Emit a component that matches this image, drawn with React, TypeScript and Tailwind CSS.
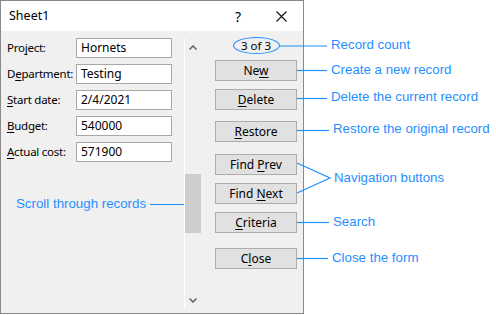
const BLUE = '#1f8fff';

const fields = [
  { pre: 'Pro', key: 'j', post: 'ect:', value: 'Hornets' },
  { pre: 'D', key: 'e', post: 'partment:', value: 'Testing' },
  { pre: '', key: 'S', post: 'tart date:', value: '2/4/2021' },
  { pre: '', key: 'B', post: 'udget:', value: '540000' },
  { pre: '', key: 'A', post: 'ctual cost:', value: '571900' },
];

const buttons = [
  { pre: 'Ne', key: 'w', post: '', mt: 'mt-[6px]' },
  { pre: '', key: 'D', post: 'elete', mt: 'mt-[8px]' },
  { pre: '', key: 'R', post: 'estore', mt: 'mt-[11px]' },
  { pre: 'Find ', key: 'P', post: 'rev', mt: 'mt-[12px]' },
  { pre: 'Find ', key: 'N', post: 'ext', mt: 'mt-[8px]' },
  { pre: '', key: 'C', post: 'riteria', mt: 'mt-[8px]' },
  { pre: 'C', key: 'l', post: 'ose', mt: 'mt-[15px]' },
];

const callouts = [
  { text: 'Record count', x: 331, y: 45 },
  { text: 'Create a new record', x: 331, y: 70 },
  { text: 'Delete the current record', x: 331, y: 97 },
  { text: 'Restore the original record', x: 333, y: 129 },
  { text: 'Navigation buttons', x: 334, y: 178 },
  { text: 'Search', x: 333, y: 222 },
  { text: 'Close the form', x: 332, y: 258 },
  { text: 'Scroll through records', x: 16, y: 204 },
];

function Hotkey({ pre, k, post }: { pre: string; k: string; post: string }) {
  return (
    <span>
      {pre}
      <span className="underline underline-offset-2">{k}</span>
      {post}
    </span>
  );
}

export default function App() {
  return (
    <div className="relative w-[496px] h-[315px] bg-white overflow-hidden text-black font-['Noto_Sans',sans-serif] text-[12px]">
      {/* dialog */}
      <div className="w-[304px] h-[314px] border border-[#8a8a8a] flex flex-col bg-[#f0f0f0]">
        <div className="h-[30px] bg-white flex items-center pl-[8px] pr-[16px] shrink-0">
          <span className="text-[12.5px]">Sheet1</span>
          <span className="ml-auto mr-[35px] text-[14px]">?</span>
          <svg width="11" height="11" viewBox="0 0 11 11">
            <path d="M0.5 0.5 L10.5 10.5 M10.5 0.5 L0.5 10.5" stroke="#111" strokeWidth="1.1" />
          </svg>
        </div>

        <div className="flex flex-1 pl-[6px]">
          <div className="flex flex-col gap-[6px] pt-[7px] w-[166px]">
            {fields.map((f) => (
              <div key={f.value} className="flex items-center h-[20px]">
                <div className="w-[69px] whitespace-nowrap text-[11.5px] tracking-[-0.25px]">
                  <Hotkey pre={f.pre} k={f.key} post={f.post} />
                </div>
                <div className="w-[96px] h-[20px] bg-white border border-[#a8a8a8] flex items-center pl-[4px]">
                  {f.value}
                </div>
              </div>
            ))}
          </div>

          <div className="ml-[11px] mt-[7px] w-[17px] h-[271px] border-l border-white flex flex-col items-center">
            <svg className="mt-[7px]" width="8" height="5" viewBox="0 0 8 5">
              <path d="M0.5 4.5 L4 1 L7.5 4.5" stroke="#606060" strokeWidth="1.5" fill="none" />
            </svg>
            <div className="mt-[124px] w-[16px] h-[59px] bg-[#cdcdcd]" />
            <svg className="mt-auto mb-[6px]" width="8" height="5" viewBox="0 0 8 5">
              <path d="M0.5 0.5 L4 4 L7.5 0.5" stroke="#606060" strokeWidth="1.5" fill="none" />
            </svg>
          </div>

          <div className="ml-[14px] w-[82px] flex flex-col pt-[6px]">
            <div className="h-[17px] flex justify-center">
              <span className="w-[47px] h-[17px] rounded-[50%] border-[1.5px] border-[#1f8fff] flex items-center justify-center text-[11.5px]">
                3 of 3
              </span>
            </div>
            {buttons.map((b) => (
              <div
                key={b.pre + b.key}
                className={`${b.mt} h-[21px] bg-[#e1e1e1] border border-[#adadad] flex items-center justify-center`}
              >
                <Hotkey pre={b.pre} k={b.key} post={b.post} />
              </div>
            ))}
          </div>
        </div>
      </div>

      {/* callout lines */}
      <svg className="absolute inset-0 pointer-events-none" width="496" height="315">
        <g stroke={BLUE} strokeWidth="1.2" fill="none">
          <line x1="279" y1="46" x2="327" y2="46" />
          <line x1="297" y1="70.5" x2="327" y2="70.5" />
          <line x1="297" y1="98.5" x2="327" y2="98.5" />
          <line x1="297" y1="130.5" x2="329" y2="130.5" />
          <polyline points="297,163 330,178 297,193" />
          <line x1="297" y1="222.5" x2="329" y2="222.5" />
          <line x1="297" y1="258.5" x2="328" y2="258.5" />
          <line x1="150" y1="204.5" x2="184" y2="204.5" />
        </g>
      </svg>

      {callouts.map((c) => (
        <span
          key={c.text}
          className="absolute -translate-y-1/2 whitespace-nowrap font-['Liberation_Sans',Arial,sans-serif] text-[13.3px] leading-none text-[#1f8fff]"
          style={{ left: c.x, top: c.y }}
        >
          {c.text}
        </span>
      ))}
    </div>
  );
}
